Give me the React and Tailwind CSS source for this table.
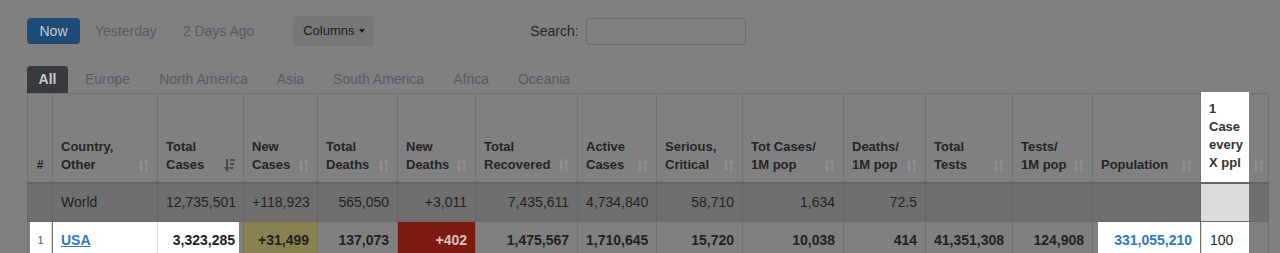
import React from 'react'

const cols = [25, 105, 86, 74, 80, 78, 102, 79, 86, 101, 82, 87, 80, 108, 68]

const headers = [
  ['#'],
  ['Country,', 'Other'],
  ['Total', 'Cases'],
  ['New', 'Cases'],
  ['Total', 'Deaths'],
  ['New', 'Deaths'],
  ['Total', 'Recovered'],
  ['Active', 'Cases'],
  ['Serious,', 'Critical'],
  ['Tot Cases/', '1M pop'],
  ['Deaths/', '1M pop'],
  ['Total', 'Tests'],
  ['Tests/', '1M pop'],
  ['Population'],
]

const world = ['', 'World', '12,735,501', '+118,923', '565,050', '+3,011', '7,435,611', '4,734,840', '58,710', '1,634', '72.5', '', '', '']

// sort arrows (down + up)
function SortIcon() {
  return (
    <svg width="11" height="15" viewBox="0 0 11 15" className="shrink-0 mb-[1px]">
      <rect x="2" y="1" width="2" height="10" fill="#8f8f8f" />
      <polygon points="0,9 6,9 3,14" fill="#8f8f8f" />
      <rect x="7.5" y="4" width="1.6" height="10" fill="#8f8f8f" />
      <polygon points="5.3,5 11,5 8.3,1" fill="#8f8f8f" />
    </svg>
  )
}

// active sort: down arrow + bars
function SortDescIcon() {
  return (
    <svg width="11" height="15" viewBox="0 0 11 15" className="shrink-0 mb-[1px]">
      <rect x="2" y="1" width="2" height="10" fill="#4a4a4a" />
      <polygon points="0,9 6,9 3,14" fill="#4a4a4a" />
      <rect x="6" y="1" width="5" height="2" fill="#4a4a4a" />
      <rect x="6" y="5" width="4" height="2" fill="#4a4a4a" />
      <rect x="6" y="9" width="3" height="2" fill="#4a4a4a" />
    </svg>
  )
}

function Tab({ label }) {
  return <div className="px-[14.5px] text-[14px] leading-[27px] text-[#575b68]">{label}</div>
}

export default function App() {
  return (
    <div className="min-h-screen bg-[#808080] font-['Liberation_Sans',Arial,sans-serif] pl-[27px] pt-[16px]">
      {/* top controls */}
      <div className="flex items-center h-[30px]">
        <div className="w-[53px] h-[26px] rounded-[4px] bg-[#1e4b77] text-[#c3cbd3] text-[14px] flex items-center justify-center">
          Now
        </div>
        <div className="ml-[15px] text-[14px] text-[#575b68]">Yesterday</div>
        <div className="ml-[26px] text-[14px] text-[#575b68]">2 Days Ago</div>
        <div className="ml-[39px] w-[81px] h-[30px] rounded-[4px] bg-[#777777] text-[13px] text-[#1c1c1c] flex items-center justify-center gap-[4px]">
          Columns
          <span className="inline-block w-0 h-0 border-l-[3.5px] border-r-[3.5px] border-t-[4px] border-l-transparent border-r-transparent border-t-[#1c1c1c]" />
        </div>
        <div className="ml-[156px] text-[14px] text-[#262626]">Search:</div>
        <div className="ml-[7px] w-[160px] h-[27px] rounded-[4px] border border-[#6c6c6c] bg-[#808080]" />
      </div>

      {/* continent tabs */}
      <div className="flex mt-[20px] w-[1241px] border-b border-[#707070]">
        <div className="w-[41px] h-[27px] rounded-t-[3px] bg-[#373a3f] text-[#c9c9c9] text-[14px] font-bold flex items-center justify-center">
          All
        </div>
        <div className="flex ml-[2.5px]">
          {['Europe', 'North America', 'Asia', 'South America', 'Africa', 'Oceania'].map(t => (
            <Tab key={t} label={t} />
          ))}
        </div>
      </div>

      {/* table */}
      <table className="table-fixed border-collapse w-[1241px] text-[#222222]">
        <colgroup>
          {cols.map((w, i) => <col key={i} style={{ width: w }} />)}
        </colgroup>
        <thead>
          <tr className="border-b-2 border-[#646464]">
            {headers.map((h, i) => (
              <th
                key={i}
                className="h-[88px] p-0 align-bottom border-x border-[#717171] text-left text-[13px] leading-[18px] font-bold text-[#252525]"
              >
                {i === 0 ? (
                  <div className="pb-[8px] text-center text-[12px]">#</div>
                ) : (
                  <div className="flex items-end justify-between pl-[8px] pr-[8px] pb-[8px]">
                    <div>
                      {h.map((l, j) => <div key={j} className="whitespace-nowrap">{l}</div>)}
                    </div>
                    {i === 2 ? <SortDescIcon /> : <SortIcon />}
                  </div>
                )}
              </th>
            ))}
            <th className="h-[88px] p-0 align-bottom border-x border-[#717171] text-left text-[13px] leading-[18px] font-bold">
              <div className="flex items-end">
                <div className="w-[48px] h-[90px] -mt-[2px] bg-white text-[#333333] pl-[8px] pt-[8px]">
                  <div>1</div>
                  <div>Case</div>
                  <div>every</div>
                  <div>X ppl</div>
                </div>
                <div className="flex-1 flex justify-center pb-[8px]">
                  <SortIcon />
                </div>
              </div>
            </th>
          </tr>
        </thead>
        <tbody>
          {/* World row */}
          <tr className="bg-[#6f6f6f] border-b border-[#6a6a6a]">
            {world.map((v, i) => (
              <td
                key={i}
                className={`h-[37px] px-[8px] text-[14px] text-[#232323] border-x border-[#666666] ${i === 1 ? 'text-left' : 'text-right'}`}
              >
                {v}
              </td>
            ))}
            <td className="h-[37px] p-0 border-x border-[#666666]">
              <div className="w-[48px] h-[37px] bg-[#dcdcdc]" />
            </td>
          </tr>

          {/* USA row */}
          <tr className="text-[14px] font-bold">
            <td className="h-[37px] p-0 border-x border-[#717171]">
              <div className="ml-[2px] h-[37px] bg-white border-r border-[#dddddd] flex items-center justify-center text-[11px] font-normal text-[#555555]">
                1
              </div>
            </td>
            <td className="h-[37px] p-0 bg-white border-r border-[#dddddd]">
              <div className="h-[37px] px-[8px] flex items-center">
                <span className="text-[#2f78bd] underline">USA</span>
              </div>
            </td>
            <td className="h-[37px] p-0 border-r border-[#717171]">
              <div className="mr-[4px] h-[37px] bg-white flex items-center justify-end pr-[4px]">3,323,285</div>
            </td>
            <td className="h-[37px] px-[8px] text-right bg-[#8a8150] border-x border-[#717171]">+31,499</td>
            <td className="h-[37px] px-[8px] text-right border-x border-[#717171]">137,073</td>
            <td className="h-[37px] px-[8px] text-right bg-[#7e1b11] text-[#d5c1be] border-x border-[#717171]">+402</td>
            <td className="h-[37px] px-[8px] text-right border-x border-[#717171]">1,475,567</td>
            <td className="h-[37px] px-[8px] text-right border-x border-[#717171]">1,710,645</td>
            <td className="h-[37px] px-[8px] text-right border-x border-[#717171]">15,720</td>
            <td className="h-[37px] px-[8px] text-right border-x border-[#717171]">10,038</td>
            <td className="h-[37px] px-[8px] text-right border-x border-[#717171]">414</td>
            <td className="h-[37px] px-[8px] text-right border-x border-[#717171]">41,351,308</td>
            <td className="h-[37px] px-[8px] text-right border-x border-[#717171]">124,908</td>
            <td className="h-[37px] p-0 border-l border-[#717171]">
              <div className="ml-[5px] h-[37px] bg-white flex items-center justify-end pr-[8px] text-[#2f78bd]">
                331,055,210
              </div>
            </td>
            <td className="h-[37px] p-0 border-x border-[#717171]">
              <div className="w-[48px] h-[37px] bg-white border-l border-[#dddddd] flex items-center pl-[8px] font-normal text-[#222222]">
                100
              </div>
            </td>
          </tr>
        </tbody>
      </table>
    </div>
  )
}
